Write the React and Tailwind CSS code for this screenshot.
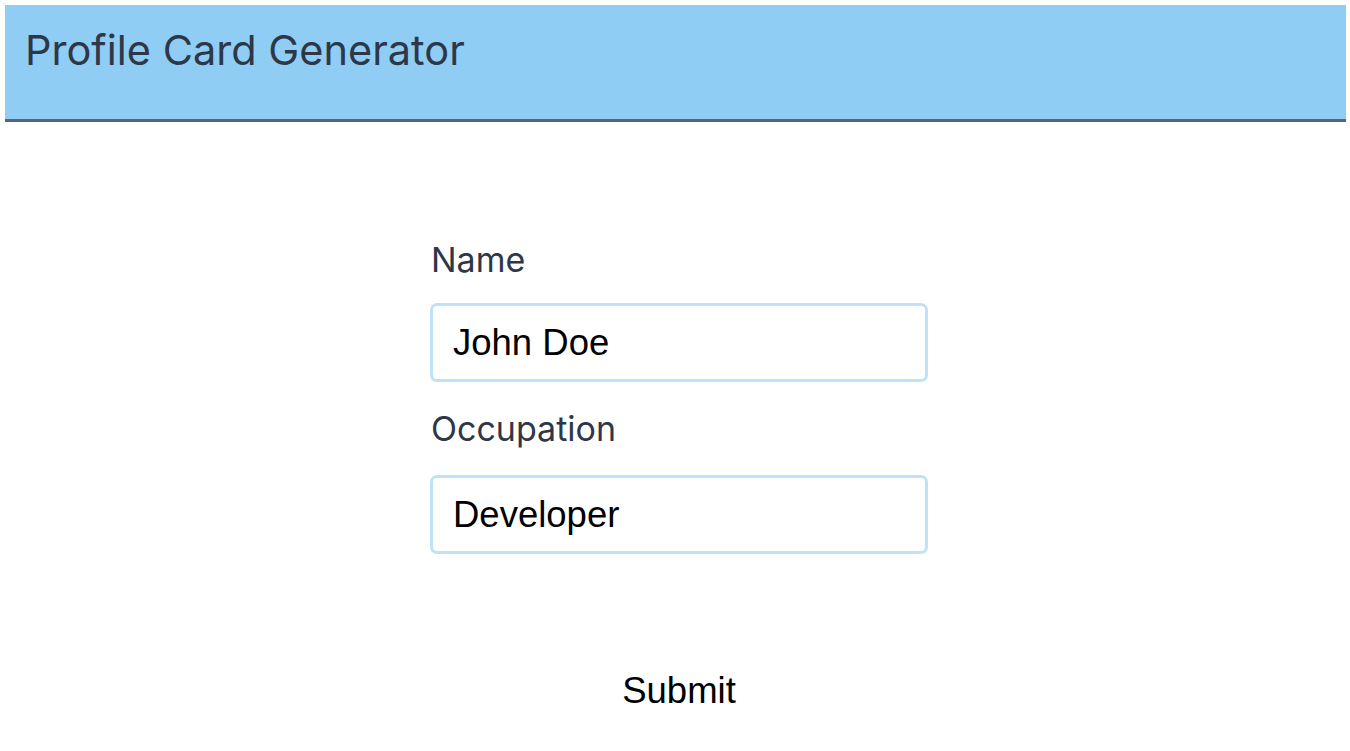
import { useState } from "react";

export default function App() {
    const [name, setName] = useState("John Doe");
    const [occupation, setOccupation] = useState("Developer");

    return (
        <div className="min-h-screen bg-white pl-[5px] pt-[5px] pr-[4px]">
            <header className="h-[117px] bg-[#90cdf4] border-b-[3px] border-[#5a6478] px-[20px] pt-[19px]">
                <h1 className="font-['Inter',sans-serif] text-[41.5px] leading-[52px] text-[#2d3748]">
                    Profile Card Generator
                </h1>
            </header>

            <main className="flex flex-col items-center pl-[7px]">
                <form
                    className="flex flex-col w-[498px] mt-[117px]"
                    onSubmit={(e) => e.preventDefault()}
                >
                    <label className="pl-[1px] font-['Inter',sans-serif] text-[34px] leading-[42px] text-[#2d3748]">
                        Name
                    </label>
                    <input
                        className="mt-[22px] h-[79px] w-full rounded-[7px] border-[3px] border-[#bee3f8] pl-[20px] font-['Liberation_Sans',Arial,sans-serif] text-[36.5px] text-black outline-none"
                        value={name}
                        onChange={(e) => setName(e.target.value)}
                    />
                    <label className="mt-[26px] pl-[1px] font-['Inter',sans-serif] text-[34px] leading-[42px] text-[#2d3748]">
                        Occupation
                    </label>
                    <input
                        className="mt-[25px] h-[79px] w-full rounded-[7px] border-[3px] border-[#bee3f8] pl-[20px] font-['Liberation_Sans',Arial,sans-serif] text-[36.5px] text-black outline-none"
                        value={occupation}
                        onChange={(e) => setOccupation(e.target.value)}
                    />
                    <button
                        type="submit"
                        className="mt-[116px] self-center font-['Liberation_Sans',Arial,sans-serif] text-[36.5px] leading-[41px] text-black"
                    >
                        Submit
                    </button>
                </form>
            </main>
        </div>
    );
}
